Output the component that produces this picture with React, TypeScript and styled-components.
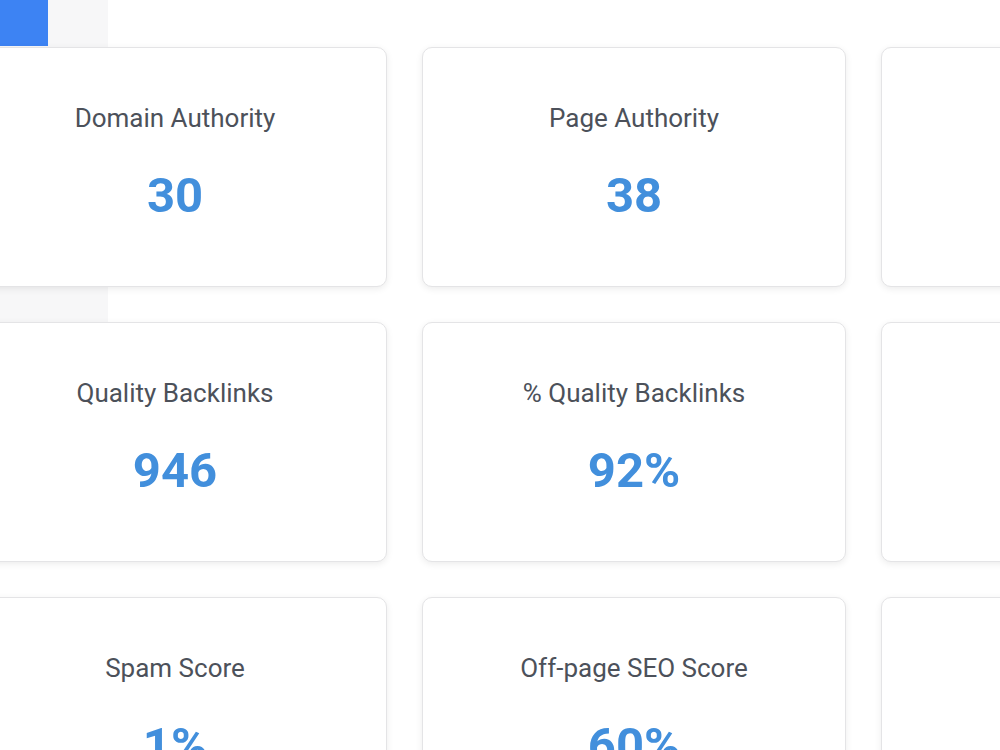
import React from 'react';
import styled, { createGlobalStyle } from 'styled-components';

interface Metric {
  label?: string;
  value?: string;
}

// third column cards sit past the right edge, so only their frames show
const metrics: Metric[] = [
  { label: 'Domain Authority', value: '30' },
  { label: 'Page Authority', value: '38' },
  {},
  { label: 'Quality Backlinks', value: '946' },
  { label: '% Quality Backlinks', value: '92%' },
  {},
  { label: 'Spam Score', value: '1%' },
  { label: 'Off-page SEO Score', value: '60%' },
  {},
];

const GlobalStyle = createGlobalStyle`
  html, body {
    margin: 0;
    padding: 0;
    background: #ffffff;
    overflow: hidden;
  }

  body {
    font-family: Roboto, 'Noto Sans', Arial, sans-serif;
  }
`;

const StyledPage = styled.div`
  width: 1000px;
  height: 750px;
  overflow: hidden;
  background: linear-gradient(#f7f7f8, #f7f7f8) no-repeat 0 0 / 108px 322px, #ffffff;
`;

const StyledTopBar = styled.div`
  display: flex;
  height: 47px;
`;

const StyledActiveTab = styled.div`
  width: 48px;
  height: 46px;
  background-color: #3d83f3;
`;

const StyledGrid = styled.div`
  display: grid;
  grid-template-columns: repeat(3, 424px);
  grid-auto-rows: 240px;
  gap: 35px;
  margin-left: -37px;
`;

const StyledCard = styled.div`
  display: flex;
  flex-direction: column;
  align-items: center;
  box-sizing: border-box;
  padding-top: 55px;
  background-color: #ffffff;
  border: 1px solid #e4e4e6;
  border-radius: 10px;
  box-shadow: 0 2px 7px rgba(0, 0, 0, 0.08);
`;

const StyledLabel = styled.div`
  font-size: 26px;
  line-height: 30px;
  color: #4c515a;
  white-space: nowrap;
`;

const StyledValue = styled.div`
  margin-top: 34px;
  font-size: 49px;
  line-height: 58px;
  font-weight: 700;
  color: #428fdc;
  white-space: nowrap;
`;

export default function App() {
  return (
    <>
      <GlobalStyle />
      <StyledPage>
        <StyledTopBar>
          <StyledActiveTab />
        </StyledTopBar>
        <StyledGrid>
          {metrics.map((metric, index) => (
            <StyledCard key={index}>
              {metric.label && <StyledLabel>{metric.label}</StyledLabel>}
              {metric.value && <StyledValue>{metric.value}</StyledValue>}
            </StyledCard>
          ))}
        </StyledGrid>
      </StyledPage>
    </>
  );
}
